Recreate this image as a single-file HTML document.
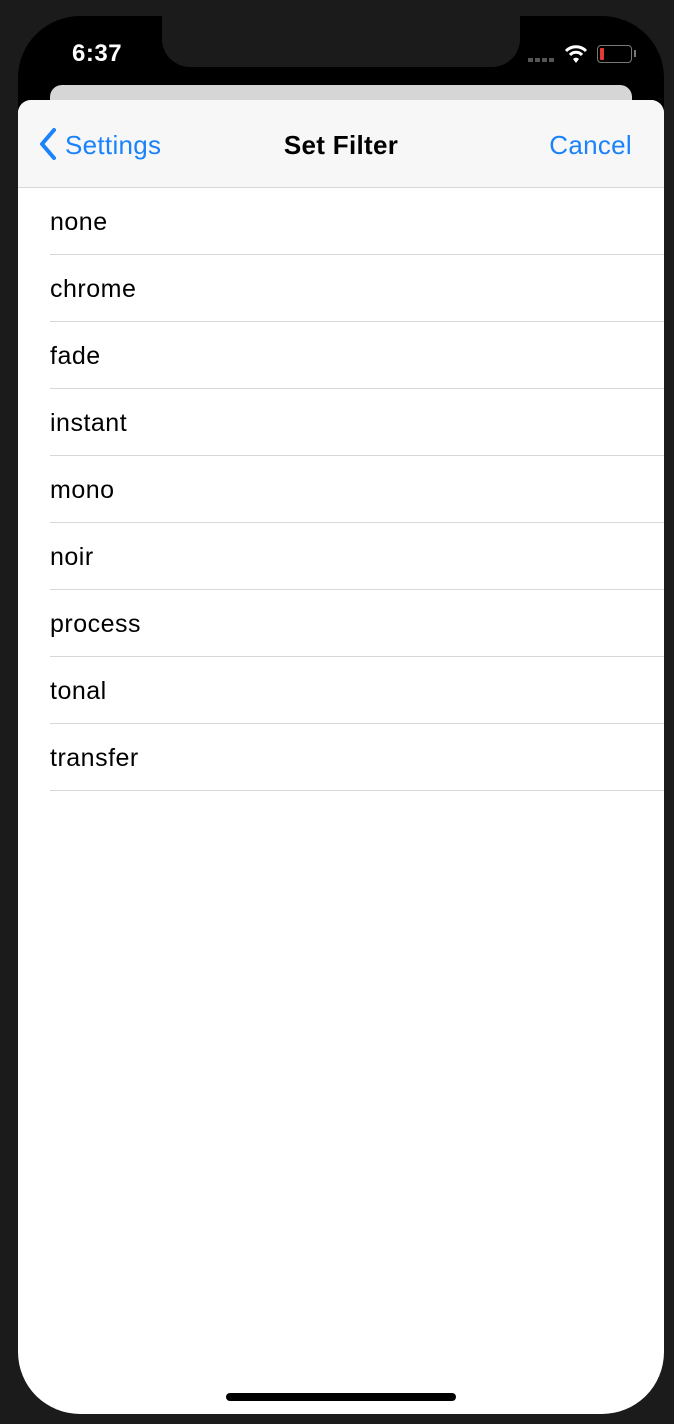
<!DOCTYPE html>
<html><head><style>
body{margin:0;width:674px;height:1424px;background:#1b1b1b;position:relative;overflow:hidden;font-family:"Liberation Sans",sans-serif}
.screen{position:absolute;left:18px;top:16px;width:646px;height:1398px;background:#000;border-radius:62px;overflow:hidden}
.notch{position:absolute;left:162px;top:16px;width:358px;height:51px;background:#1b1b1b;border-radius:0 0 28px 28px}
.time{position:absolute;left:72px;top:40px;color:#fff;font-size:24px;font-weight:bold;letter-spacing:0.5px}
.back{position:absolute;left:50px;top:85px;width:582px;height:40px;background:#d6d6d6;border-radius:12px}
.sheet{position:absolute;left:18px;top:100px;width:646px;height:1314px;background:#fff;border-radius:13px 13px 62px 62px;overflow:hidden}
.nav{height:87px;background:#f7f7f7;border-bottom:1px solid #d8d8d8;position:relative}
.nav span{position:absolute;top:30px;font-size:26px;letter-spacing:0.3px}
.row{margin-left:32px;height:66px;border-bottom:1px solid #d8d8d8;font-size:25px;letter-spacing:0.5px;line-height:68px;color:#000}
.home{position:absolute;left:226px;top:1393px;width:230px;height:8px;background:#000;border-radius:4px}
</style></head><body>
<div class="screen"></div>
<div class="notch"></div>
<div class="time">6:37</div>
<div style="position:absolute;left:528px;top:58px;width:28px;height:4px;background:repeating-linear-gradient(90deg,#555 0 5px,transparent 5px 7px)"></div>
<svg style="position:absolute;left:564px;top:44px" width="24" height="20" viewBox="0 0 24 20"><path d="M2 7a14 14 0 0 1 20 0" stroke="#fff" stroke-width="3" fill="none"/><path d="M6 11a8 8 0 0 1 12 0" stroke="#fff" stroke-width="3" fill="none"/><path d="M9 15l3 4 3-4a4 4 0 0 0-6 0z" fill="#fff"/></svg>
<div style="position:absolute;left:597px;top:45px;width:33px;height:16px;border:1.5px solid #777;border-radius:4px"><div style="margin:2px;width:4px;height:12px;background:#e53935;border-radius:1px"></div></div>
<div style="position:absolute;left:634px;top:50px;width:2px;height:7px;background:#777"></div>
<div class="back"></div>
<div class="sheet">
<div class="nav">
<svg style="position:absolute;left:20px;top:27px" width="20" height="34" viewBox="0 0 20 34"><path d="M16 3L4 17l12 14" stroke="#1a82fb" stroke-width="4" fill="none" stroke-linecap="round" stroke-linejoin="round"/></svg>
<span style="left:47px;color:#1a82fb">Settings</span>
<span style="left:0;right:0;text-align:center;font-weight:bold;color:#000">Set Filter</span>
<span style="right:32px;color:#1a82fb">Cancel</span>
</div>
<div class="row">none</div><div class="row">chrome</div><div class="row">fade</div><div class="row">instant</div><div class="row">mono</div><div class="row">noir</div><div class="row">process</div><div class="row">tonal</div><div class="row">transfer</div>
</div>
<div class="home"></div>
</body></html>
